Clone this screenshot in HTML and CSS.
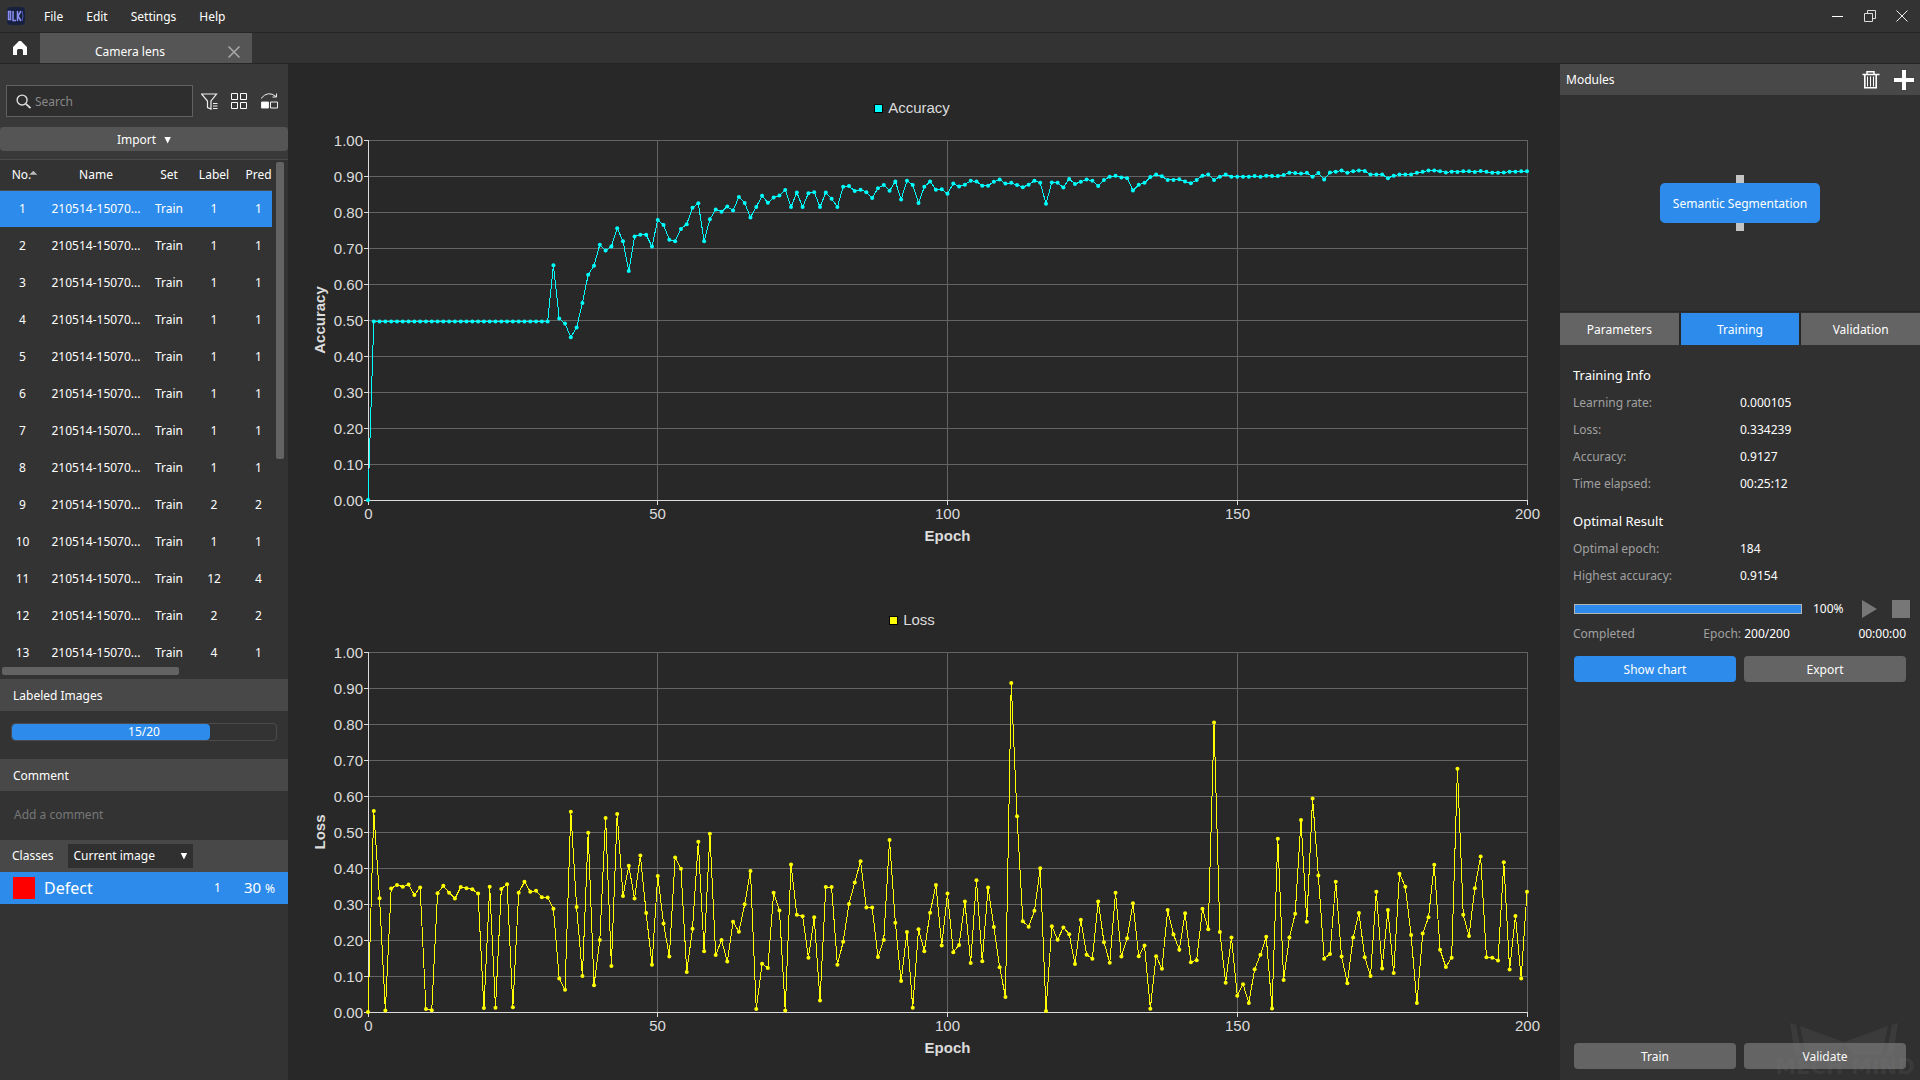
FILE: index.html
```html
<!DOCTYPE html>
<html lang="en">
<head>
<meta charset="utf-8">
<title>Camera lens</title>
<link rel="stylesheet" href="styles.css">
</head>
<body>
<header class="titlebar">
  <svg class="logo" viewBox="0 0 18 18" aria-hidden="true">
    <rect width="18" height="18" rx="4" fill="#17213f"/>
    <path d="M1.500 4.500v8h2v-8zM6 4v9.500h3M10.500 4v10M14 4l-3 5 3 5" fill="none" stroke="#8d8ff0" stroke-width="1.500"/>
    <path d="M15 4q2 5 0 10" fill="none" stroke="#4d55b0"/>
  </svg>
  <nav class="menu">
    <button>File</button><button>Edit</button><button>Settings</button><button>Help</button>
  </nav>
  <div class="window-buttons">
    <button aria-label="Minimize"><svg viewBox="0 0 12 12"><path d="M0 6.500h11" stroke="#fff"/></svg></button>
    <button aria-label="Restore"><svg viewBox="0 0 12 12" fill="none" stroke="#ddd"><path d="M.5 3.500h8v8h-8zM3.500 3V.5h8v8H9"/></svg></button>
    <button aria-label="Close"><svg viewBox="0 0 12 12"><path d="M.5 .5l11 11M11.500 .5l-11 11" stroke="#eee"/></svg></button>
  </div>
</header>

<div class="tabbar">
  <button class="home" aria-label="Home"><svg viewBox="0 0 14 14"><path d="M0 6l6-6h2l6 6v8h-4V9.500Q10 8 8.500 8h-3Q4 8 4 9.500V14H0z" fill="#fff"/></svg></button>
  <div class="tab">
    <span class="tab-name">Camera lens</span>
    <button class="tab-close" aria-label="Close tab"><svg viewBox="0 0 12 12"><path d="M.5 .5l11 11M11.500 .5l-11 11" stroke="#aaa" stroke-width="1.500"/></svg></button>
  </div>
</div>

<div class="workspace">
  <aside class="sidebar">
    <div class="tools">
      <div class="tool-row">
        <label class="search">
          <svg viewBox="0 0 16 16" fill="none" stroke="#ddd" stroke-width="1.500"><circle cx="6.500" cy="6.500" r="5.300"/><path d="M10.500 10.500l5 4.500" stroke-width="2"/></svg>
          <input type="text" placeholder="Search" aria-label="Search">
        </label>
        <button aria-label="Filter"><svg viewBox="0 0 17 17" fill="none" stroke="#eee"><path d="M.5 1h15L10 8v8l-3.500-1.500V8L.5 1z" stroke-width="1.200"/><path d="M12 10.500h4.500M12 13h4.500M12 15.500h4.500"/></svg></button>
        <button aria-label="Grid view"><svg viewBox="0 0 17 17" fill="none" stroke="#fff"><path d="M.5 .5h6v6h-6zM9.500 .5h6v6h-6zM.5 9.500h6v6h-6zM9.500 9.500h6v6h-6z"/></svg></button>
        <button aria-label="Swap view"><svg viewBox="0 0 17 17" fill="none" stroke="#eee"><path d="M0 5.500Q7-3 15 3.500M15.500 .5v3.500h-4"/><path d="M.5 9h7v6h-7z" fill="#fff"/><path d="M9.500 9h7v6h-7z"/></svg></button>
      </div>
      <button class="import">Import <span class="caret"></span></button>
    </div>

    <div class="table-area">
      <div class="table-view">
        <table class="images">
          <colgroup><col class="c-no"><col class="c-name"><col class="c-set"><col class="c-label"><col class="c-pred"></colgroup>
          <thead><tr><th>No.<span class="sort"></span></th><th>Name</th><th>Set</th><th>Label</th><th>Pred</th></tr></thead>
          <tbody>
            <tr class="selected"><td>1</td><td>210514-15070...</td><td>Train</td><td>1</td><td>1</td></tr>
            <tr><td>2</td><td>210514-15070...</td><td>Train</td><td>1</td><td>1</td></tr>
            <tr><td>3</td><td>210514-15070...</td><td>Train</td><td>1</td><td>1</td></tr>
            <tr><td>4</td><td>210514-15070...</td><td>Train</td><td>1</td><td>1</td></tr>
            <tr><td>5</td><td>210514-15070...</td><td>Train</td><td>1</td><td>1</td></tr>
            <tr><td>6</td><td>210514-15070...</td><td>Train</td><td>1</td><td>1</td></tr>
            <tr><td>7</td><td>210514-15070...</td><td>Train</td><td>1</td><td>1</td></tr>
            <tr><td>8</td><td>210514-15070...</td><td>Train</td><td>1</td><td>1</td></tr>
            <tr><td>9</td><td>210514-15070...</td><td>Train</td><td>2</td><td>2</td></tr>
            <tr><td>10</td><td>210514-15070...</td><td>Train</td><td>1</td><td>1</td></tr>
            <tr><td>11</td><td>210514-15070...</td><td>Train</td><td>12</td><td>4</td></tr>
            <tr><td>12</td><td>210514-15070...</td><td>Train</td><td>2</td><td>2</td></tr>
            <tr><td>13</td><td>210514-15070...</td><td>Train</td><td>4</td><td>1</td></tr>
          </tbody>
        </table>
      </div>
      <div class="scroll-v"></div>
      <div class="scroll-h"></div>
    </div>

    <h2 class="section-title">Labeled Images</h2>
    <div class="labeled">
      <div class="labeled-bar"><div class="labeled-fill" style="width:75%"></div><span>15/20</span></div>
    </div>

    <h2 class="section-title">Comment</h2>
    <textarea class="comment" placeholder="Add a comment" aria-label="Comment"></textarea>

    <div class="section-title classes-title">
      <label for="scope">Classes</label>
      <span class="select"><select id="scope"><option>Current image</option></select><span class="caret"></span></span>
    </div>
    <div class="class-row">
      <span class="swatch"></span><span class="class-name">Defect</span><span class="class-count">1</span><span class="class-share">30 <small>%</small></span>
    </div>
  </aside>

  <main class="charts">
    <figure class="chart chart-accuracy">
      <figcaption class="legend"><span class="key"></span>Accuracy</figcaption>
      <div class="plot" data-series="accuracy" data-title="Accuracy"></div>
    </figure>
    <figure class="chart chart-loss">
      <figcaption class="legend"><span class="key"></span>Loss</figcaption>
      <div class="plot" data-series="loss" data-title="Loss"></div>
    </figure>
  </main>

  <aside class="inspector">
    <div class="modules-title">
      <h2>Modules</h2>
      <button aria-label="Delete module"><svg width="18" height="18" viewBox="0 0 18 18" fill="none" stroke="#fff"><path d="M.5 3.500h17M5 3V.8h7V3" stroke-width="1.500"/><path d="M2.800 4v12.800h11.400V4" stroke-width="1.600"/><path d="M5.500 5.500v10M8.500 5.500v10M11.500 5.500v10"/></svg></button>
      <button aria-label="Add module"><svg width="20" height="20" viewBox="0 0 20 20"><path d="M10 0v20M0 10h20" stroke="#fff" stroke-width="4"/></svg></button>
    </div>
    <div class="canvas"><button class="node">Semantic Segmentation</button></div>
    <div class="tabs" role="tablist">
      <button role="tab">Parameters</button><button role="tab" class="active" aria-selected="true">Training</button><button role="tab">Validation</button>
    </div>
    <div class="panel">
      <h3>Training Info</h3>
      <dl>
        <dt>Learning rate:</dt><dd>0.000105</dd>
        <dt>Loss:</dt><dd>0.334239</dd>
        <dt>Accuracy:</dt><dd>0.9127</dd>
        <dt>Time elapsed:</dt><dd>00:25:12</dd>
      </dl>
      <h3>Optimal Result</h3>
      <dl>
        <dt>Optimal epoch:</dt><dd>184</dd>
        <dt>Highest accuracy:</dt><dd>0.9154</dd>
      </dl>
      <div class="run">
        <div class="run-bar"></div><span class="run-percent">100%</span>
        <button aria-label="Start"><svg width="18" height="18" viewBox="0 0 18 18"><path d="M0 0l15 9-15 9z" fill="#777"/></svg></button>
        <button aria-label="Stop"><svg width="18" height="18" viewBox="0 0 18 18"><path d="M0 0h18v18H0z" fill="#777"/></svg></button>
      </div>
      <div class="status"><span>Completed</span><span>Epoch: <b>200/200</b></span><b>00:00:00</b></div>
      <div class="actions"><button class="primary">Show chart</button><button>Export</button></div>
      <div class="actions bottom"><button>Train</button><button>Validate</button></div>
    </div>
    <svg class="watermark" width="148" height="58" viewBox="0 0 148 58" aria-hidden="true">
      <path d="M19 1l6 2 6 30h-7zM29 4l44 16L117 4l-6 29H82l-9-12-9 12H35zM127 1l-6 2-6 30h7z"/>
      <text x="74" y="52">MECH MIND</text>
    </svg>
  </aside>
</div>
<script src="charts.js"></script>
</body>
</html>
```
FILE: styles.css
```css
* { box-sizing: border-box; }
html, body { height: 100%; }
body {
  margin: 0;
  display: flex;
  flex-direction: column;
  background: #282828;
  color: #fff;
  font: 12px/16px "Noto Sans", "Open Sans", sans-serif;
}
button, input, select, textarea { font: inherit; color: inherit; }
button { border: 0; padding: 0; background: none; }
svg { display: block; }
h2, h3, dl, dd, figure { margin: 0; font-weight: 400; }
h2 { font-size: 12px; }

.titlebar {
  flex: none;
  height: 33px;
  padding: 0 12px 0 7px;
  display: flex;
  align-items: center;
  background: #333;
  border-bottom: 1px solid #262626;
}
.logo { width: 18px; height: 18px; }
.menu { display: flex; gap: 23px; margin-left: 19px; padding-top: 2px; flex: 1; }
.window-buttons { display: flex; gap: 20px; }
.window-buttons svg { width: 12px; height: 12px; }

.tabbar {
  flex: none;
  height: 31px;
  display: flex;
  background: #333;
  border-bottom: 1px solid #262626;
}
.home { width: 40px; padding: 0 13px; }
.home svg { width: 14px; height: 14px; }
.tab {
  width: 212px;
  padding: 8px 12px 0 30px;
  display: flex;
  align-items: center;
  background: #555;
}
.tab-name { flex: 1; padding-left: 25px; }
.tab-close svg { width: 12px; height: 12px; }

.workspace { flex: 1; display: flex; min-height: 0; }

.sidebar {
  flex: 0 0 288px;
  min-width: 0;
  display: flex;
  flex-direction: column;
  background: #333;
}
.tools { padding-top: 21px; background: #393939; border-bottom: 1px solid #4b4b4b; }
.tool-row { display: flex; align-items: center; gap: 13px; padding: 0 10px 0 6px; }
.tool-row svg { width: 17px; height: 17px; flex: none; }
.search {
  flex: 1;
  min-width: 0;
  height: 32px;
  margin-right: -5px;
  padding: 0 9px;
  display: flex;
  align-items: center;
  gap: 4px;
  background: #2e2e2e;
  border: 1px solid #606060;
}
.search svg { width: 15px; height: 15px; }
.search input { flex: 1; min-width: 0; border: 0; padding: 2px 0 0; background: none; outline: 0; }
.search input::placeholder { color: #888; opacity: 1; }
.import {
  width: 100%;
  height: 24px;
  margin: 10px 0 8px;
  padding-top: 2px;
  display: flex;
  align-items: center;
  justify-content: center;
  gap: 8px;
  background: #555;
  border-radius: 4px;
}
.caret {
  width: 7px;
  height: 7px;
  background: #fff;
  clip-path: polygon(0 0, 100% 0, 50% 100%);
}

.table-area {
  display: grid;
  grid-template-columns: 272px 8px;
  grid-template-rows: 507px 8px;
  column-gap: 4px;
  padding-bottom: 4px;
}
.table-view { overflow: hidden; }
.scroll-v { height: 297px; margin-top: 2px; background: #636363; border-radius: 2px; }
.scroll-h { width: 177px; margin-left: 2px; background: #636363; border-radius: 2px; }
.images { width: 280px; table-layout: fixed; border-collapse: collapse; text-align: center; white-space: nowrap; }
.c-no { width: 45px; }
.c-name { width: 102px; }
.c-set { width: 44px; }
.c-label { width: 46px; }
.c-pred { width: 43px; }
.images th { height: 30px; padding: 0; font-weight: 400; border-bottom: 1px solid #4b4b4b; }
.images td { height: 37px; padding: 0; }
.selected { background: #2d8ceb; }
.sort {
  display: inline-block;
  width: 8px;
  height: 4px;
  margin: 0 -4px 4px -2px;
  background: #bbb;
  clip-path: polygon(50% 0, 100% 100%, 0 100%);
}

.section-title {
  flex: none;
  height: 32px;
  padding: 2px 13px 0;
  display: flex;
  align-items: center;
  background: #484848;
}
.labeled { padding: 12px 11px 18px; }
.labeled-bar {
  height: 18px;
  display: grid;
  border: 1px solid #4b4b4b;
  border-radius: 4px;
}
.labeled-fill, .labeled-bar span { grid-area: 1 / 1; }
.labeled-fill { background: #2d8ceb; border-radius: 4px; }
.labeled-bar span { text-align: center; }
.comment {
  width: 100%;
  height: 49px;
  padding: 16px 14px;
  border: 0;
  background: none;
  resize: none;
  outline: 0;
}
.comment::placeholder { color: #777; opacity: 1; }
.classes-title { padding: 0 12px; gap: 15px; }
.select { display: flex; align-items: center; width: 125px; height: 24px; padding: 0 6px 0 5px; background: #303030; }
.select select { flex: 1; min-width: 0; padding: 0; border: 0; background: none; appearance: none; outline: 0; }
.class-row { height: 32px; padding: 0 13px; display: flex; align-items: center; background: #2d8ceb; font-size: 16px; }
.swatch { width: 22px; height: 22px; background: #f00; }
.class-name { flex: 1; padding-left: 9px; }
.class-count { width: 30px; font-size: 12px; }
.class-share { font-size: 15px; }
.class-share small { font-size: 12px; }

.charts { flex: 1; min-width: 0; display: flex; flex-direction: column; gap: 8px; }
.chart {
  flex: 1;
  min-height: 0;
  display: flex;
  flex-direction: column;
  color: #dcdcdc;
  font: 15px/24px "Liberation Sans", Arial, sans-serif;
}
.chart-accuracy { --series: #0ff; }
.chart-loss { --series: #ff0; }
.legend {
  display: flex;
  align-items: center;
  justify-content: center;
  gap: 5px;
  padding: 32px 24px 0 0;
}
.key { width: 9px; height: 9px; background: var(--series); border: 1px solid #000; }
.plot { flex: 1; min-height: 0; overflow: hidden; }
.plot text { fill: #dcdcdc; text-anchor: middle; }
.plot .y-label { text-anchor: end; }
.plot .axis-title { font-weight: 700; }
.grid-line { stroke: #646464; fill: none; shape-rendering: crispEdges; }
.axis-line { stroke: #dcdcdc; fill: none; shape-rendering: crispEdges; }
.series-line { stroke: var(--series); fill: none; shape-rendering: crispEdges; }
.series-dot { fill: var(--series); }

.inspector {
  flex: 0 0 360px;
  position: relative;
  display: flex;
  flex-direction: column;
  background: #303030;
}
.modules-title {
  height: 31px;
  padding: 0 6px;
  display: flex;
  align-items: center;
  gap: 14px;
  background: #484848;
}
.modules-title h2 { flex: 1; }
.canvas { height: 217px; display: flex; align-items: center; justify-content: center; border-bottom: 1px solid #262626; }
.node { position: relative; width: 160px; height: 40px; padding-top: 2px; background: #2d8ceb; border-radius: 5px; }
.node::before, .node::after {
  content: "";
  position: absolute;
  left: 76px;
  width: 8px;
  height: 8px;
  background: #c4c4c4;
}
.node::before { top: -8px; }
.node::after { bottom: -8px; }
.tabs { display: flex; gap: 2px; margin-top: 1px; background: #262626; }
.tabs button { flex: 1; height: 32px; padding-top: 2px; background: #646464; }
.tabs .active { background: #2d8ceb; }
.panel { flex: 1; display: flex; flex-direction: column; padding: 20px 14px 11px 13px; }
.panel h3 { font-size: 13px; line-height: 20px; margin-bottom: 4px; }
.panel dl {
  display: grid;
  grid-template-columns: 167px 1fr;
  line-height: 27px;
  margin-bottom: 14px;
}
.panel dt { color: #a0a0a0; }
.run { display: flex; align-items: center; margin-top: -3px; }
.run-bar { flex: 1; height: 10px; margin-left: 1px; background: #2d8ceb; border: 1px solid #b4b4b4; }
.run-percent { width: 60px; padding-left: 11px; }
.run button + button { margin-left: 12px; margin-right: -4px; }
.status { display: flex; justify-content: space-between; margin-top: 8px; color: #a0a0a0; }
.status b { color: #fff; font-weight: 400; }
.actions { display: flex; gap: 8px; margin-top: 14px; padding-left: 1px; }
.actions button { flex: 1; height: 26px; padding-top: 2px; background: #646464; border-radius: 4px; }
.actions .primary { background: #2d8ceb; }
.actions.bottom { margin-top: auto; }
.watermark { position: absolute; right: 1px; bottom: 0; pointer-events: none; fill: rgba(130, 130, 130, 0.14); }
.watermark text { font: 700 21px "DejaVu Sans", sans-serif; text-anchor: middle; }
```
FILE: charts.js
```js
// Values per epoch, in thousandths.
const flat = new Array(31).fill(496);
const series = {
  accuracy: [0, ...flat,
    652, 504, 490, 452, 479, 547, 626, 651, 709, 693, 704, 755, 719, 636, 732, 737, 737, 704,
    778, 764, 723, 719, 753, 766, 812, 824, 719, 780, 807, 801, 815, 804, 842, 825, 785, 814, 845, 826,
    840, 846, 861, 814, 854, 814, 852, 855, 814, 854, 837, 814, 870, 872, 858, 862, 855, 839, 866, 875,
    859, 885, 835, 887, 875, 825, 870, 885, 862, 863, 851, 879, 871, 876, 887, 885, 873, 873, 884, 890,
    879, 881, 875, 869, 876, 887, 881, 823, 882, 881, 868, 892, 878, 884, 890, 887, 872, 889, 898, 901,
    896, 894, 860, 876, 881, 897, 904, 899, 889, 889, 891, 885, 880, 889, 901, 904, 889, 898, 904, 898,
    898, 898, 898, 900, 898, 901, 900, 900, 903, 909, 908, 907, 909, 898, 908, 890, 910, 912, 915, 909,
    913, 915, 914, 904, 904, 904, 894, 901, 904, 904, 904, 909, 912, 915, 915, 913, 910, 912, 911, 913,
    913, 911, 914, 912, 909, 909, 910, 912, 912, 913, 913],
  loss: [0, 558, 316, 4, 343, 353, 348, 354, 325, 346,
    8, 5, 330, 351, 331, 315, 347, 344, 341, 329,
    11, 348, 12, 342, 355, 13, 331, 362, 334, 337,
    319, 318, 287, 93, 62, 556, 292, 100, 498, 74,
    200, 539, 128, 550, 322, 406, 315, 435, 275, 131,
    378, 246, 154, 429, 398, 111, 231, 473, 169, 495,
    158, 200, 140, 251, 223, 299, 392, 8, 134, 122,
    331, 282, 4, 410, 270, 266, 151, 263, 32, 347,
    347, 131, 195, 300, 360, 419, 290, 290, 153, 200,
    478, 248, 86, 222, 12, 230, 169, 276, 353, 185,
    329, 166, 186, 307, 136, 366, 141, 346, 236, 124,
    42, 914, 544, 252, 237, 281, 399, 3, 238, 201,
    235, 216, 133, 256, 159, 148, 307, 194, 137, 331,
    154, 205, 302, 155, 185, 9, 155, 120, 283, 215,
    173, 274, 138, 144, 287, 230, 804, 222, 81, 207,
    45, 77, 25, 119, 159, 209, 10, 481, 89, 207,
    273, 533, 251, 593, 379, 148, 161, 362, 154, 80,
    207, 275, 152, 100, 334, 121, 283, 108, 384, 348,
    214, 25, 218, 263, 409, 173, 125, 151, 676, 270,
    211, 344, 432, 152, 151, 143, 416, 118, 267, 93, 334]
};

const margin = { left: 80, right: 33, top: 20, bottom: 68 };

function draw(plot) {
  plot.replaceChildren();
  const width = plot.clientWidth;
  const height = plot.clientHeight;
  const bottom = height - margin.bottom;
  const right = width - margin.right;
  const x = epoch => margin.left + (right - margin.left) * epoch / 200;
  const y = value => bottom - (bottom - margin.top) * value;
  const snap = n => Math.floor(n) + 0.5;
  const parts = [];

  for (let i = 0; i <= 10; i++) {
    const py = snap(y(i / 10));
    if (i) parts.push(`<path class="grid-line" d="M${margin.left} ${py}H${right}"/>`);
    parts.push(`<path class="axis-line" d="M${margin.left - 4} ${py}h4"/>`);
    parts.push(`<text class="y-label" x="${margin.left - 5}" y="${py + 5}">${(i / 10).toFixed(2)}</text>`);
  }
  for (let epoch = 0; epoch <= 200; epoch += 50) {
    const px = snap(x(epoch));
    if (epoch) parts.push(`<path class="grid-line" d="M${px} ${margin.top}V${bottom}"/>`);
    parts.push(`<path class="axis-line" d="M${px} ${bottom}v5"/>`);
    parts.push(`<text x="${px}" y="${bottom + 19}">${epoch}</text>`);
  }
  parts.push(`<path class="axis-line" d="M${margin.left + 0.5} ${margin.top}V${bottom + 0.5}H${right + 1}"/>`);

  const points = series[plot.dataset.series].map((v, i) => [x(i), y(v / 1000)]);
  parts.push(`<polyline class="series-line" points="${points.map(p => p.join()).join(' ')}"/>`);
  points.forEach(p => parts.push(`<circle class="series-dot" cx="${p[0]}" cy="${p[1]}" r="2"/>`));

  const midY = (margin.top + bottom) / 2;
  parts.push(`<text class="axis-title" x="${(margin.left + right) / 2}" y="${bottom + 41}">Epoch</text>`);
  parts.push(`<text class="axis-title" transform="translate(37 ${midY}) rotate(-90)">${plot.dataset.title}</text>`);
  plot.innerHTML = `<svg width="${width}" height="${height}">${parts.join('')}</svg>`;
}

const drawAll = () => document.querySelectorAll('.plot').forEach(draw);
drawAll();
window.addEventListener('resize', drawAll);
```
